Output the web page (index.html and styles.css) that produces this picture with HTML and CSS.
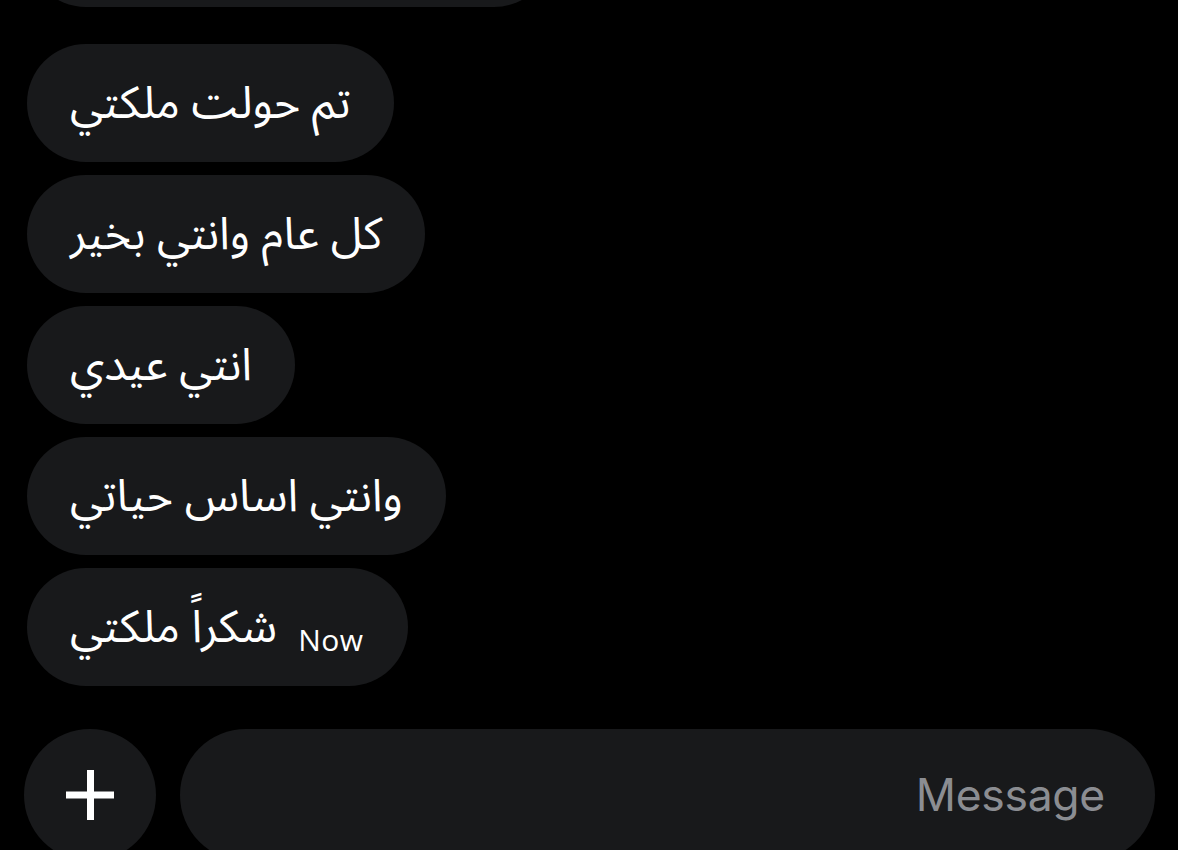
FILE: index.html
```html
<!DOCTYPE html>
<html lang="ar">
<head>
<meta charset="utf-8">
<link rel="stylesheet" href="styles.css">
</head>
<body>
<main class="chat">
  <div class="thread">
    <div class="bubble bubble-prev"></div>
    <div class="bubble"><span class="msg" dir="rtl">تم حولت ملكتي</span></div>
    <div class="bubble"><span class="msg" dir="rtl">كل عام وانتي بخير</span></div>
    <div class="bubble"><span class="msg" dir="rtl">انتي عيدي</span></div>
    <div class="bubble"><span class="msg" dir="rtl">وانتي اساس حياتي</span></div>
    <div class="bubble bubble-last"><span class="msg" dir="rtl">شكراً ملكتي</span><span class="time">Now</span></div>
  </div>
  <div class="composer">
    <div class="plus">
      <svg width="48" height="50" viewBox="0 0 48 50" aria-hidden="true">
        <path d="M24.5 0V50M0 25H48" stroke="#fff" stroke-width="7" fill="none"/>
      </svg>
    </div>
    <div class="field"><span class="placeholder">Message</span></div>
  </div>
</main>
</body>
</html>
```
FILE: styles.css
```css
html, body {
  margin: 0;
  padding: 0;
  background: #000;
  overflow: hidden;
}
.chat {
  width: 1178px;
  height: 850px;
  overflow: hidden;
}
.thread {
  display: flex;
  flex-direction: column;
  align-items: flex-start;
  gap: 13px;
  padding-left: 27px;
}
.bubble {
  height: 118px;
  box-sizing: border-box;
  border-radius: 59px;
  background: #18191b;
  padding: 0 43px;
  display: flex;
  align-items: center;
}
.bubble-prev {
  width: 526px;
  margin-top: -111px;
  margin-bottom: 24px;
}
.msg {
  color: #fff;
  font-family: "Noto Sans Arabic", "DejaVu Sans", sans-serif;
  font-size: 45px;
  line-height: 1;
}
.bubble-last {
  align-items: center;
  gap: 21px;
}
.time {
  color: #fff;
  font-family: "Open Sans", "Noto Sans", sans-serif;
  font-size: 30px;
  letter-spacing: 0.5px;
  line-height: 1;
  margin-top: 26px;
  margin-right: 1px;
}
.composer {
  display: flex;
  gap: 24px;
  padding-left: 24px;
  margin-top: 43px;
}
.plus {
  width: 132px;
  height: 132px;
  flex: none;
  border-radius: 50%;
  background: #18191b;
  display: flex;
  align-items: center;
  justify-content: center;
}
.field {
  width: 975px;
  height: 132px;
  border-radius: 66px;
  background: #18191b;
  display: flex;
  align-items: center;
  justify-content: flex-end;
  padding-right: 50px;
  box-sizing: border-box;
}
.placeholder {
  color: #8b8d92;
  font-family: "Inter", "Liberation Sans", sans-serif;
  font-size: 44.5px;
  letter-spacing: -0.3px;
  line-height: 1;
}
```
